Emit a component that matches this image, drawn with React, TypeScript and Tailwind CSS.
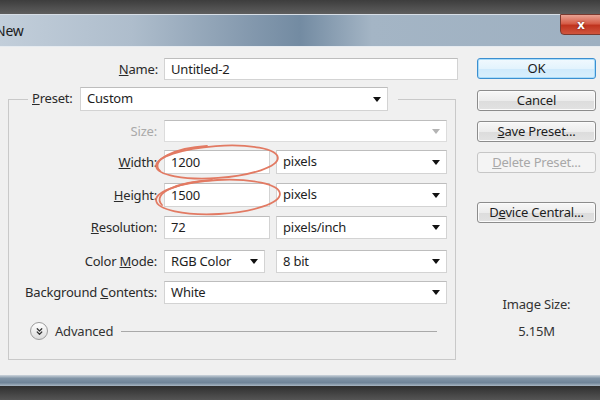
import { ChevronsDown } from "lucide-react";

const inputCls =
  "h-full bg-white border border-[#d3d3d3] border-t-[#bdbdbd] px-[6px] flex items-center text-[#1e1e1e]";

function Arrow({ muted = false }: { muted?: boolean }) {
  return (
    <svg width="8" height="5" viewBox="0 0 8 5" className="shrink-0">
      <path d="M0 0h8L4 5z" fill={muted ? "#b4b4b4" : "#111"} />
    </svg>
  );
}

function Select({ value, className = "", muted = false }: { value: string; className?: string; muted?: boolean }) {
  return (
    <div className={`${inputCls} justify-between pr-[6px] ${muted ? "bg-[#f6f6f6] border-[#dcdcdc]" : ""} ${className}`}>
      <span className="whitespace-nowrap leading-normal">{value}</span>
      <Arrow muted={muted} />
    </div>
  );
}

function Label({ children, muted = false }: { children: React.ReactNode; muted?: boolean }) {
  return (
    <div className={`w-[148px] shrink-0 text-right ${muted ? "text-[#a9a9a9]" : "text-[#2a2a2a]"}`}>
      {children}
    </div>
  );
}

function Btn({
  children,
  primary = false,
  disabled = false,
  className = "",
}: {
  children: React.ReactNode;
  primary?: boolean;
  disabled?: boolean;
  className?: string;
}) {
  const look = primary
    ? "border-[#3b8fd0] bg-[linear-gradient(#f1f9fe,#e3f3fd_50%,#cfeafc_51%,#d9effc)] shadow-[inset_0_0_0_1px_#a9dcfa] text-[#1a1a1a]"
    : disabled
      ? "border-[#c6c6c6] bg-[#f4f4f4] text-[#a8a8a8]"
      : "border-[#8c8c8c] bg-[linear-gradient(#f7f7f7,#ececec_50%,#dcdcdc_51%,#e2e2e2)] shadow-[inset_0_0_0_1px_#fbfbfb] text-[#1e1e1e]";
  return (
    <div className={`h-[21px] w-full rounded-[3px] border flex items-center justify-center ${look} ${className}`}>
      {children}
    </div>
  );
}

export default function App() {
  return (
    <div className="relative w-[600px] h-[400px] overflow-hidden flex flex-col font-['Noto_Sans','Open_Sans',sans-serif] text-[13px] leading-none tracking-[-0.2px]">
      <div className="h-[14px] shrink-0 bg-[linear-gradient(#3d3d3d,#5e5e5e)]" />

      <div className="h-[32px] shrink-0 flex justify-between items-start border-t border-[#d7dee6] bg-[linear-gradient(90deg,#c2ceda_0%,#aebdcc_22%,#8398ad_42%,#738ba2_50%,#a4b5c5_62%,#9eb0c1_100%)]">
        <span className="ml-[-5px] mt-[9px] text-[14px] text-[#1b1b1b]">New</span>
        <div className="mt-[-1px] mr-[-6px] w-[46px] h-[21px] rounded-bl-[4px] border border-[#7a3a30] bg-[linear-gradient(#e9a293,#d65d48_45%,#c0341f_55%,#d0553e)] flex items-center justify-center">
          <span className="text-white font-bold text-[13px] ml-[-4px] [text-shadow:0_0_2px_#5a1a10]">x</span>
        </div>
      </div>

      <div className="flex-1 flex bg-[#f0f0f0] border-t border-[#e6ebf0]">
        <div className="w-[477px] shrink-0 pt-[11px]">
          <div className="flex h-[22px] items-center">
            <div className="w-[158px] text-right text-[#2a2a2a]">
              <u>N</u>ame:
            </div>
            <div className={`${inputCls} ml-[6px] w-[294px]`}>Untitled-2</div>
          </div>

          <fieldset className="mt-[7px] ml-[8px] w-[448px] border border-[#c9c9c9] pb-[19px]">
            <legend className="ml-[19px] pl-[4px] pr-[10px]">
              <div className="flex items-center h-[24px]">
                <span className="text-[#2a2a2a] w-[48px] leading-normal">
                  <u>P</u>reset:
                </span>
                <Select value="Custom" className="w-[308px]" />
              </div>
            </legend>

            <div className="flex items-center h-[22px] mt-[9px]">
              <Label muted>Size:</Label>
              <Select value="" muted className="ml-[7px] w-[283px]" />
            </div>

            <div className="flex items-center h-[24px] mt-[8px]">
              <Label>
                <u>W</u>idth:
              </Label>
              <div className={`${inputCls} ml-[7px] w-[106px]`}>1200</div>
              <Select value="pixels" className="ml-[6px] w-[171px]" />
            </div>

            <div className="flex items-center h-[24px] mt-[9px]">
              <Label>
                <u>H</u>eight:
              </Label>
              <div className={`${inputCls} ml-[7px] w-[106px]`}>1500</div>
              <Select value="pixels" className="ml-[6px] w-[171px]" />
            </div>

            <div className="flex items-center h-[23px] mt-[9px]">
              <Label>
                <u>R</u>esolution:
              </Label>
              <div className={`${inputCls} ml-[7px] w-[106px] border-[#8fb4dc] border-t-[#7ea6d2]`}>72</div>
              <Select value="pixels/inch" className="ml-[6px] w-[171px]" />
            </div>

            <div className="flex items-center h-[23px] mt-[11px]">
              <Label>
                Color <u>M</u>ode:
              </Label>
              <Select value="RGB Color" className="ml-[7px] w-[101px]" />
              <Select value="8 bit" className="ml-[11px] w-[171px]" />
            </div>

            <div className="flex items-center h-[23px] mt-[8px]">
              <Label>
                Background <u>C</u>ontents:
              </Label>
              <Select value="White" className="ml-[7px] w-[283px]" />
            </div>

            <div className="flex items-center h-[18px] mt-[18px] pl-[21px] pr-[18px]">
              <div className="w-[18px] h-[18px] rounded-full border border-[#9c9c9c] bg-[linear-gradient(#ffffff,#dcdcdc)] flex items-center justify-center">
                <ChevronsDown size={11} strokeWidth={2.6} color="#333" />
              </div>
              <span className="ml-[7px] text-[#333] text-[13px]">Advanced</span>
              <div className="ml-[8px] flex-1 h-px bg-[#a9a9a9]" />
            </div>
          </fieldset>
        </div>

        <div className="w-[119px] shrink-0 pt-[11px] flex flex-col items-center">
          <Btn primary>OK</Btn>
          <Btn className="mt-[11px]">Cancel</Btn>
          <Btn className="mt-[10px]">
            <span>
              <u>S</u>ave Preset...
            </span>
          </Btn>
          <Btn disabled className="mt-[10px]">
            <span>
              <u>D</u>elete Preset...
            </span>
          </Btn>
          <Btn className="mt-[29px]">
            <span>
              D<u>e</u>vice Central...
            </span>
          </Btn>
          <div className="mt-[75px] text-[#333]">Image Size:</div>
          <div className="mt-[14px] text-[#333]">5.15M</div>
        </div>
      </div>

      <div className="h-[11px] shrink-0 bg-[linear-gradient(#cdd5dc,#8194a6_30%,#6f8498_70%,#a9b6c2)]" />
      <div className="h-[14px] shrink-0 bg-[linear-gradient(#2f2f2f,#555)]" />

      <svg className="absolute inset-0 pointer-events-none" width="600" height="400" viewBox="0 0 600 400">
        <g fill="none" stroke="#e27a63" strokeWidth="1.8" strokeLinecap="round">
          <ellipse cx="217" cy="162" rx="61" ry="16" transform="rotate(-4 217 162)" />
          <path d="M160 171 C149 160 175 148 207 146" />
          <ellipse cx="218" cy="197" rx="62" ry="17" transform="rotate(-3 218 197)" />
          <path d="M162 205 C151 193 178 182 212 180" />
        </g>
      </svg>
    </div>
  );
}
